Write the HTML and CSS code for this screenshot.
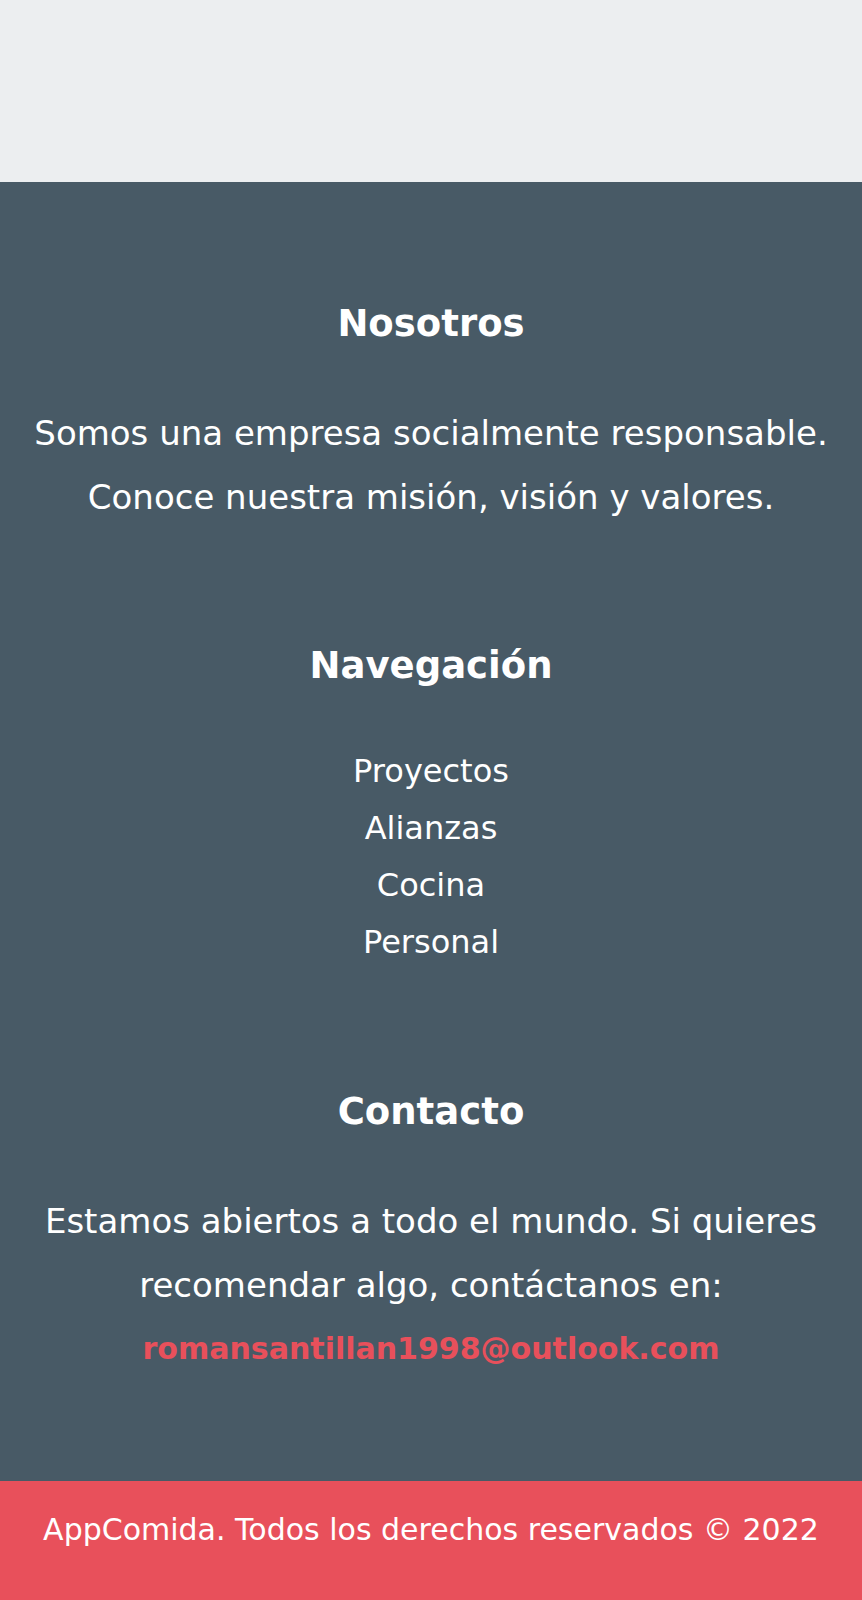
FILE: index.html
```html
<!DOCTYPE html>
<html lang="es">
<head>
<meta charset="utf-8">
<title>AppComida</title>
<link rel="stylesheet" href="styles.css">
</head>
<body>
<div class="top"></div>
<footer class="site-footer">
  <div class="col">
    <h3 class="col-title">Nosotros</h3>
    <p class="col-text">Somos una empresa socialmente responsable. Conoce nuestra misión, visión y valores.</p>
  </div>
  <div class="col col-nav">
    <h3 class="col-title">Navegación</h3>
    <nav class="nav-list">
      <a href="#" class="nav-link">Proyectos</a>
      <a href="#" class="nav-link">Alianzas</a>
      <a href="#" class="nav-link">Cocina</a>
      <a href="#" class="nav-link">Personal</a>
    </nav>
  </div>
  <div class="col">
    <h3 class="col-title">Contacto</h3>
    <p class="col-text">Estamos abiertos a todo el mundo. Si quieres recomendar algo, contáctanos en: <a href="#" class="email">romansantillan1998@outlook.com</a></p>
  </div>
</footer>
<div class="copyright">
  <p class="copy-text">AppComida. Todos los derechos reservados © 2022</p>
</div>
</body>
</html>
```
FILE: styles.css
```css
* { box-sizing: border-box; }
html, body { margin: 0; padding: 0; }
body {
  font-family: "DejaVu Sans", "Noto Sans", sans-serif;
  color: #fff;
  background: #e8505b;
}
.top {
  height: 182px;
  background: #eceef0;
}
.site-footer {
  background: #485a66;
  padding: 120px 20px 100px;
  display: flex;
  flex-direction: column;
  gap: 115px;
  text-align: center;
}
.col {
  display: flex;
  flex-direction: column;
  align-items: center;
  gap: 56px;
}
.col-nav {
  margin-bottom: 4px;
}
.col-title {
  margin: 0;
  font-size: 37px;
  line-height: 43px;
  font-weight: 700;
}
.col-text {
  margin: 0;
  font-size: 34px;
  line-height: 64px;
  font-weight: 400;
}
.nav-list {
  display: flex;
  flex-direction: column;
  align-items: center;
}
.nav-link {
  color: #fff;
  text-decoration: none;
  font-size: 32px;
  line-height: 57px;
}
.email {
  display: block;
  color: #e8505b;
  text-decoration: none;
  font-weight: 700;
  font-size: 30px;
}
.copyright {
  background: #e8505b;
  padding: 29px 16px 50px;
  display: flex;
  justify-content: center;
}
.copy-text {
  margin: 0;
  font-size: 30px;
  line-height: 40px;
}
```
